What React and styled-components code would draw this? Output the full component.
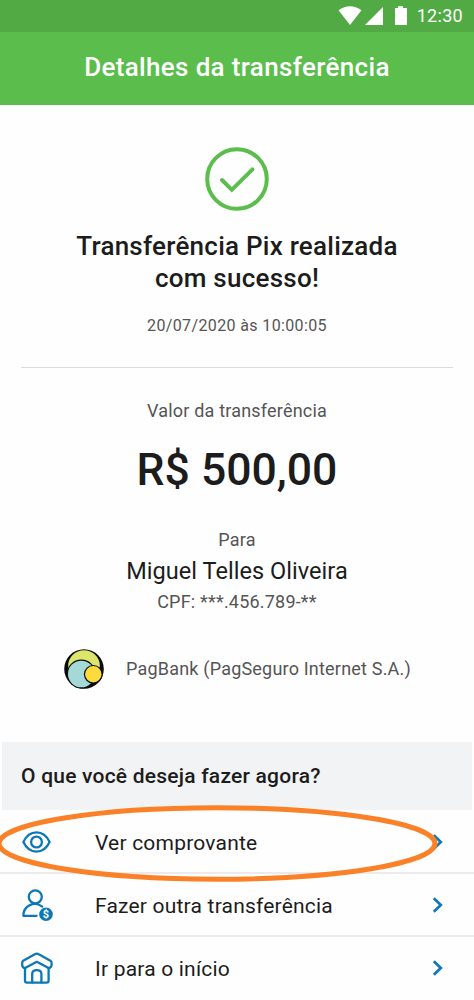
import React from 'react';
import styled, { createGlobalStyle } from 'styled-components';


const theme = {
  green: '#5bbd4c',
  greenDark: '#51aa44',
  blue: '#0d78b5',
  orange: '#fa8128',
  ink: '#1c1c1c',
  muted: '#555',
  panel: '#f2f3f5',
};


const GlobalStyle = createGlobalStyle`
  * {
    box-sizing: border-box;
  }

  body {
    margin: 0;
    background: #fefefe;
    font-family: Roboto, sans-serif;
    color: ${theme.ink};
  }
`;


const Screen = styled.div`
  display: flex;
  flex-direction: column;
  width: 474px;
  height: 1000px;
  overflow: hidden;
`;


const StatusBar = styled.div`
  display: flex;
  flex: none;
  justify-content: flex-end;
  align-items: center;
  height: 32px;
  padding-right: 11px;
  background: ${theme.greenDark};
  color: #fff;
`;


const Clock = styled.span`
  margin-left: 9px;
  font-size: 18px;
  line-height: 32px;
  letter-spacing: 0.3px;
`;


const AppBar = styled.header`
  flex: none;
  height: 73px;
  background: ${theme.green};
  color: #fff;
  font-size: 26px;
  font-weight: 500;
  line-height: 71px;
  letter-spacing: 0.34px;
  text-align: center;
`;


const Summary = styled.section`
  display: flex;
  flex: none;
  flex-direction: column;
  align-items: center;
  height: 263px;
  margin: 0 21px;
  padding-top: 42px;
  border-bottom: 1px solid #dcdcdc;
`;


const Text = styled.div`
  margin-top: ${(props) => props.$gap || 0}px;
  color: ${(props) => (props.$muted ? theme.muted : theme.ink)};
  font-size: ${(props) => props.$size}px;
  font-weight: ${(props) => (props.$bold ? 500 : 400)};
  line-height: ${(props) => props.$line}px;
  letter-spacing: ${(props) => props.$spacing || 0}px;
  text-align: center;
  white-space: nowrap;
`;


const Details = styled.section`
  display: flex;
  flex: none;
  flex-direction: column;
  align-items: center;
  height: 374px;
  padding-top: 29px;
`;


const Bank = styled.div`
  display: flex;
  align-items: center;
  gap: 22px;
  margin-top: 34px;
  padding-left: 1px;
`;


const Question = styled.h2`
  flex: none;
  height: 68px;
  margin: 0 2px;
  padding-left: 19px;
  background: ${theme.panel};
  font-size: 21px;
  font-weight: 500;
  line-height: 68px;
  letter-spacing: 0.22px;
`;


const Actions = styled.div`
  position: relative;
  flex: none;
`;


const Action = styled.div`
  display: grid;
  grid-template-columns: 74px 1fr 12px;
  align-items: center;
  height: ${(props) => props.$height || 63}px;
  padding: ${(props) => props.$top || 1}px 30px 0 21px;
  border-bottom: 2px solid ${(props) => (props.$last ? 'transparent' : '#ebebed')};

  svg {
    display: block;
  }
`;


const Label = styled.span`
  padding-top: 2px;
  font-size: 21px;
  line-height: 24px;
  letter-spacing: 0.2px;
`;


const Highlight = styled.svg`
  position: absolute;
  top: -7px;
  left: -4px;
`;


const stroke = {
  fill: 'none',
  stroke: theme.blue,
  strokeWidth: 2.3,
  strokeLinecap: 'round',
  strokeLinejoin: 'round',
};


const StatusIcons = () => (
  <svg width="70" height="22" viewBox="0 0 70 22" fill="#fff">
    <path d="M0.5 5.2 Q12 -2.8 23.5 5.2 L12 20 Z" />
    <path d="M27 20 L45 20 L45 2 Z" />
    <path d="M57 3 h3 v-1.8 h5 v1.8 h4 v17 h-12 Z" />
  </svg>
);


const CheckIcon = () => (
  <svg width="64" height="64" viewBox="0 0 64 64" fill="none" stroke={theme.green}>
    <circle cx="32" cy="32" r="29.8" strokeWidth="4" />
    <path d="M17 33 L26.8 42.8 L47.5 22.3" strokeWidth="4" strokeLinecap="round" />
  </svg>
);


const BankLogo = () => (
  <svg width="40" height="40" viewBox="0 0 40 40">
    <circle cx="20" cy="20" r="19.8" fill="#0b0b0b" />
    <ellipse cx="20" cy="16.8" rx="15.8" ry="15.6" fill="#dbe66a" />
    <circle cx="17.3" cy="25" r="14.4" fill="#0b0b0b" />
    <circle cx="17.3" cy="25" r="13.3" fill="#a4d9d8" />
    <circle cx="29.3" cy="25.3" r="9.4" fill="#0b0b0b" />
    <circle cx="29.3" cy="25.3" r="8.2" fill="#fcdb3a" />
  </svg>
);


const EyeIcon = () => (
  <svg width="32" height="24" viewBox="0 0 32 24" {...stroke}>
    <path d="M2.4 12 C8.4 -0.8 22.6 -0.8 28.6 12 C22.6 24.8 8.4 24.8 2.4 12 Z" />
    <circle cx="15.5" cy="12" r="5.4" />
  </svg>
);


const PersonIcon = () => (
  <svg width="34" height="34" viewBox="0 0 34 34" {...stroke}>
    <circle cx="14.3" cy="8.8" r="6.5" />
    <path d="M21.2 18.6 C13.4 12.8 2.4 17.4 2.4 27.8 H15.6" />
    <circle cx="25" cy="26.3" r="6.8" fill={theme.blue} stroke="none" />
    <text
      x="25"
      y="30.2"
      fill="#fff"
      stroke="none"
      fontSize="11"
      fontWeight="700"
      textAnchor="middle"
    >
      $
    </text>
  </svg>
);


const HomeIcon = () => (
  <svg width="34" height="34" viewBox="0 0 34 34" {...stroke}>
    <path d="M13.8 3.3 Q15.8 2.1 17.8 3.3 L29.4 9.8 Q30.6 10.5 30.6 12 V14 Q30 17.6 26.6 16.6 L15.8 10.8 L5 16.6 Q1.6 17.6 1.2 14 V12 Q1.2 10.5 2.2 9.8 Z" />
    <path d="M4 17 V29.5 Q4 31.6 6 31.6 H25.6 Q27.6 31.6 27.6 29.5 V17" />
    <path d="M11.2 31.4 V23 Q11.2 19.2 15.8 19.2 Q20.4 19.2 20.4 23 V31.4" />
  </svg>
);


const Chevron = () => (
  <svg width="12" height="16" viewBox="0 0 12 16" {...stroke} strokeWidth="2.7" strokeLinecap="butt" strokeLinejoin="miter">
    <path d="M1.8 1.2 L8.8 8 L1.8 14.8" />
  </svg>
);


export default function App() {
  return (
    <Screen>
      <GlobalStyle />
      <StatusBar>
        <StatusIcons />
        <Clock>12:30</Clock>
      </StatusBar>
      <AppBar>Detalhes da transferência</AppBar>

      <Summary>
        <CheckIcon />
        <Text $bold $size={26} $line={32} $gap={19} $spacing={0.24}>
          Transferência Pix realizada<br />com sucesso!
        </Text>
        <Text $muted $size={16} $line={20} $gap={22} $spacing={0.37}>20/07/2020 às 10:00:05</Text>
      </Summary>

      <Details>
        <Text $muted $size={18} $line={28} $spacing={0.2}>Valor da transferência</Text>
        <Text $bold $size={44.5} $line={54} $gap={18}>R$ 500,00</Text>
        <Text $muted $size={18} $line={24} $gap={31} $spacing={0.2}>Para</Text>
        <Text $size={23.5} $line={34} $gap={2} $spacing={0.05}>Miguel Telles Oliveira</Text>
        <Text $muted $size={18} $line={26} $gap={1} $spacing={0.2}>CPF: ***.456.789-**</Text>
        <Bank>
          <BankLogo />
          <Text $muted $size={18} $line={24} $spacing={0.2}>PagBank (PagSeguro Internet S.A.)</Text>
        </Bank>
      </Details>

      <Question>O que você deseja fazer agora?</Question>
      <Actions>
        <Action $height={64} $top={2}>
          <EyeIcon />
          <Label>Ver comprovante</Label>
          <Chevron />
        </Action>
        <Action>
          <PersonIcon />
          <Label>Fazer outra transferência</Label>
          <Chevron />
        </Action>
        <Action $last>
          <HomeIcon />
          <Label>Ir para o início</Label>
          <Chevron />
        </Action>
        <Highlight width="446" height="82" viewBox="-4 803 446 82">
          <ellipse cx="217" cy="843.5" rx="218" ry="35.7" fill="none" stroke={theme.orange} strokeWidth="5" />
        </Highlight>
      </Actions>
    </Screen>
  );
}
